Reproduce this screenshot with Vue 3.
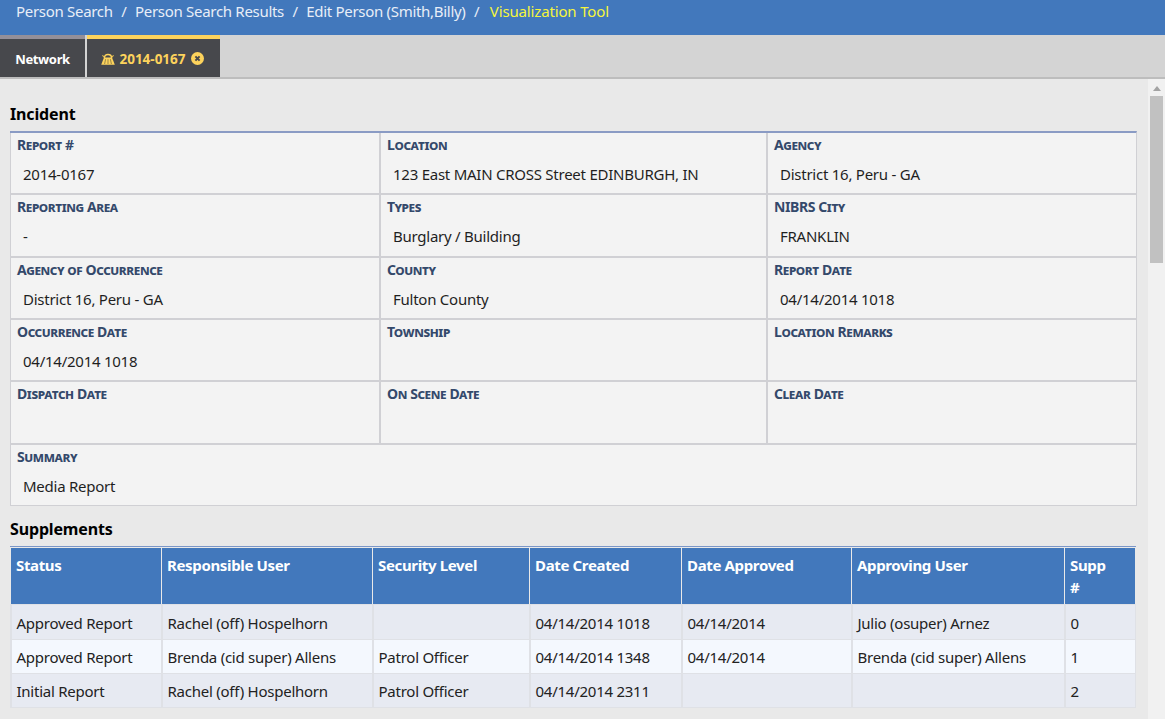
<script setup>
const crumbs = ['Person Search', 'Person Search Results', 'Edit Person (Smith,Billy)'];

const fields = [
  { label: 'Report #', value: '2014-0167' },
  { label: 'Location', value: '123 East MAIN CROSS Street EDINBURGH, IN' },
  { label: 'Agency', value: 'District 16, Peru - GA' },
  { label: 'Reporting Area', value: '-' },
  { label: 'Types', value: 'Burglary / Building' },
  { label: 'NIBRS City', value: 'FRANKLIN' },
  { label: 'Agency of Occurrence', value: 'District 16, Peru - GA' },
  { label: 'County', value: 'Fulton County' },
  { label: 'Report Date', value: '04/14/2014 1018' },
  { label: 'Occurrence Date', value: '04/14/2014 1018' },
  { label: 'Township', value: '' },
  { label: 'Location Remarks', value: '' },
  { label: 'Dispatch Date', value: '' },
  { label: 'On Scene Date', value: '' },
  { label: 'Clear Date', value: '' },
];

const columns = [
  { title: 'Status', width: 151 },
  { title: 'Responsible User', width: 211 },
  { title: 'Security Level', width: 157 },
  { title: 'Date Created', width: 152 },
  { title: 'Date Approved', width: 170 },
  { title: 'Approving User', width: 213 },
  { title: 'Supp #', width: 72 },
];

const supplements = [
  ['Approved Report', 'Rachel (off) Hospelhorn', '', '04/14/2014 1018', '04/14/2014', 'Julio (osuper) Arnez', '0'],
  ['Approved Report', 'Brenda (cid super) Allens', 'Patrol Officer', '04/14/2014 1348', '04/14/2014', 'Brenda (cid super) Allens', '1'],
  ['Initial Report', 'Rachel (off) Hospelhorn', 'Patrol Officer', '04/14/2014 2311', '', '', '2'],
];
</script>

<template>
  <div class="page">
    <header class="topBar">
      <template v-for="crumb in crumbs" :key="crumb">
        <span>{{ crumb }}</span>
        <span class="slash">/</span>
      </template>
      <span class="current">Visualization Tool</span>
    </header>

    <nav class="tabBar">
      <div class="tab">Network</div>
      <div class="tab tabActive">
        <svg class="tabIcon" viewBox="0 0 14 12" width="14" height="12">
          <path d="M3.4 5C3.4 2.6 5 1.4 7 1.4S10.6 2.6 10.6 5" fill="none" stroke="#fdd35c" stroke-width="1.5" />
          <path d="M1.4 2.4 3 3.8M12.6 2.4 11 3.8" stroke="#e8c04e" stroke-width="1.1" />
          <path d="M3 4.6h8L13.8 11.8H.2Z" fill="#fdd35c" />
          <path d="M4.6 6.2 3.6 11M7 6.2V11M9.4 6.2l1 4.8" stroke="#9a8748" stroke-width="1" />
        </svg>
        <span>2014-0167</span>
        <svg class="tabClose" viewBox="0 0 13 13" width="13" height="13">
          <circle cx="6.5" cy="6.5" r="6.5" fill="#fdd35c" />
          <path d="M4.4 4.4 8.6 8.6M8.6 4.4 4.4 8.6" stroke="#47484c" stroke-width="2" />
        </svg>
      </div>
    </nav>

    <div class="body">
      <main class="content">
        <h2 class="sectionTitle">Incident</h2>
        <div class="incident">
          <div v-for="field in fields" :key="field.label" class="field">
            <div class="fieldLabel">{{ field.label }}</div>
            <div class="fieldValue">{{ field.value }}</div>
          </div>
          <div class="field fieldWide">
            <div class="fieldLabel">Summary</div>
            <div class="fieldValue">Media Report</div>
          </div>
        </div>

        <h2 class="sectionTitle sectionTitleSupp">Supplements</h2>
        <table class="supplements">
          <colgroup>
            <col v-for="col in columns" :key="col.title" :style="{ width: col.width + 'px' }">
          </colgroup>
          <thead>
            <tr>
              <th v-for="col in columns" :key="col.title">{{ col.title }}</th>
            </tr>
          </thead>
          <tbody>
            <tr v-for="(row, i) in supplements" :key="i">
              <td v-for="(cell, j) in row" :key="j">{{ cell }}</td>
            </tr>
          </tbody>
        </table>
      </main>

      <aside class="scrollbar">
        <div class="scrollArrow"></div>
        <div class="scrollThumb"></div>
      </aside>
    </div>
  </div>
</template>

<style>
html,
body {
  margin: 0;
  overflow: hidden;
}
</style>

<style scoped>
.page {
  background: #e9e9e9;
  color: #222;
  display: flex;
  flex-direction: column;
  font-family: "Noto Sans", "Open Sans", sans-serif;
  font-size: 15px;
  height: 719px;
  overflow: hidden;
  width: 1165px;
}

.topBar {
  background: #4278bc;
  box-sizing: border-box;
  color: #e8eef7;
  display: flex;
  flex: none;
  gap: 8.5px;
  height: 35px;
  letter-spacing: -0.3px;
  line-height: 23px;
  padding-left: 16px;
}

.current {
  color: #f5f53c;
  letter-spacing: -0.15px;
  margin-left: 2px;
}

.tabBar {
  background: #d4d4d4;
  border-bottom: 2px solid #bdbdbd;
  box-sizing: border-box;
  display: flex;
  flex: none;
  gap: 2px;
  height: 44px;
}

.tab {
  align-items: center;
  background: #47484c;
  border-top: 4px solid #948f98;
  box-sizing: border-box;
  color: #fff;
  display: flex;
  font-size: 13px;
  font-weight: 700;
  height: 42px;
  justify-content: center;
  letter-spacing: -0.35px;
  padding-top: 1px;
  width: 85px;
}

.tabActive {
  border-top-color: #fdd35c;
  color: #fdd35c;
  font-size: 13.5px;
  gap: 4px;
  letter-spacing: 0;
  padding-right: 2px;
  width: 133px;
}

.tabIcon,
.tabClose {
  flex: none;
}

.tabClose {
  margin-left: 1px;
}

.body {
  display: flex;
  flex: 1;
  min-height: 0;
}

.content {
  box-sizing: border-box;
  flex: none;
  padding: 23px 0 0 10px;
  width: 1148px;
}

.sectionTitle {
  color: #000;
  font-size: 16px;
  font-weight: 700;
  letter-spacing: -0.15px;
  line-height: 24px;
  margin: 0 0 5px;
}

.sectionTitleSupp {
  margin: 11px 0 5px;
}

.incident {
  background: #d0d0d4;
  border-right: 1px solid #d0d0d4;
  border-top: 2px solid #8a9bc4;
  box-sizing: border-box;
  display: grid;
  gap: 2px;
  grid-auto-rows: 60.33px;
  grid-template-columns: 368px 385px 368px;
  padding: 0 0 1px 1px;
  width: 1127px;
}

.field {
  background: #f3f3f3;
  box-sizing: border-box;
  padding: 3px 6px;
}

.fieldWide {
  grid-column: 1 / -1;
}

.fieldLabel {
  color: #34496b;
  font-size: 14px;
  font-variant: small-caps;
  font-weight: 700;
  letter-spacing: -0.4px;
  line-height: 18px;
}

.fieldValue {
  color: #1f1f1f;
  letter-spacing: -0.25px;
  line-height: 20px;
  margin-top: 10px;
  padding-left: 6px;
}

.supplements {
  background: #dfe1e6;
  border-collapse: separate;
  border-spacing: 0;
  border-top: 1px solid #7a96c8;
  margin: 0;
  table-layout: fixed;
  width: 1126px;
}

.supplements th {
  background: #4278bc;
  border-left: 1px solid #e9e9e9;
  border-top: 1px solid #e9e9e9;
  box-sizing: border-box;
  color: #fff;
  font-size: 15px;
  font-weight: 700;
  height: 57px;
  letter-spacing: -0.35px;
  line-height: 22px;
  padding: 6px 5px 0;
  text-align: left;
  vertical-align: top;
}

.supplements th:last-child {
  border-right: 1px solid #e9e9e9;
  padding-right: 20px;
}

.supplements td {
  border-bottom: 1px solid #dfe1e6;
  border-left: 2px solid #dfe1e6;
  box-sizing: border-box;
  height: 34px;
  letter-spacing: -0.25px;
  padding: 1px 4px 0 4.5px;
}

.supplements td:last-child {
  border-right: 1px solid #dfe1e6;
}

.supplements tbody tr:first-child td {
  border-top: 1px solid #dfe1e6;
  height: 36px;
  padding-top: 2px;
}

.supplements tbody tr:nth-child(odd) td {
  background: #e7eaf2;
}

.supplements tbody tr:nth-child(even) td {
  background: #f4f8fe;
}

.scrollbar {
  background: #f1f1f1;
  box-sizing: border-box;
  display: flex;
  flex: 1;
  flex-direction: column;
  padding: 0 2px;
}

.scrollArrow {
  border-bottom: 5px solid #a3a3a3;
  border-left: 4px solid transparent;
  border-right: 4px solid transparent;
  height: 0;
  margin: 7px auto 5px;
  width: 0;
}

.scrollThumb {
  background: #c1c1c1;
  height: 167px;
}
</style>
